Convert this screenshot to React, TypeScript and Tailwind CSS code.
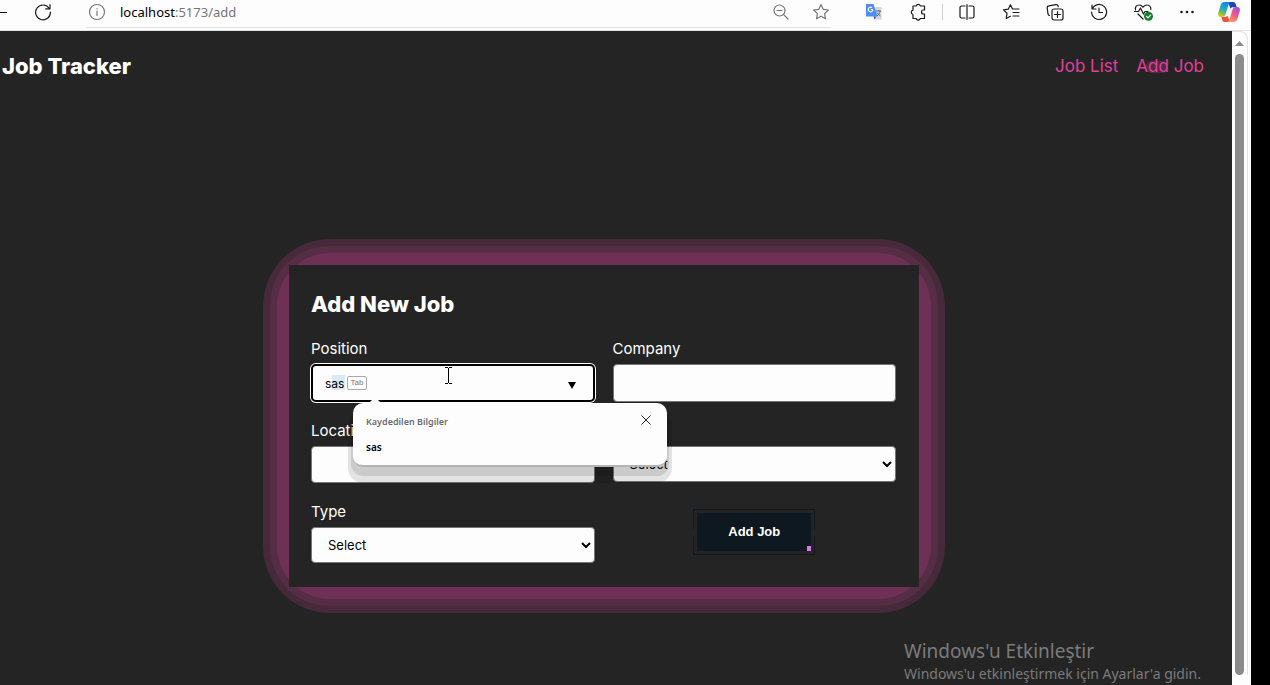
import { useState, type ReactNode } from "react";

function ToolButton({ label, children }: { label: string; children: ReactNode }) {
  return (
    <button type="button" aria-label={label} className="flex h-6 w-11 shrink-0 items-center justify-center text-[#1b1b1b]">
      {children}
    </button>
  );
}

function Icon({ children, className = "" }: { children: ReactNode; className?: string }) {
  return (
    <svg
      width="18"
      height="18"
      viewBox="0 0 18 18"
      fill="none"
      stroke="currentColor"
      strokeWidth="1.2"
      strokeLinecap="round"
      strokeLinejoin="round"
      className={className}
      aria-hidden="true"
    >
      {children}
    </svg>
  );
}

const starPath =
  "M9 1.6l2.2 4.7 5.2.7-3.8 3.6.9 5.2L9 13.3l-4.5 2.5.9-5.2L1.6 7l5.2-.7z";

function CopilotLogo() {
  return (
    <svg className="mr-1" width="24" height="22" viewBox="0 0 24 22" aria-hidden="true">
      <defs>
        <linearGradient id="cool" x1="0.6" y1="0" x2="0.25" y2="1">
          <stop offset="0" stopColor="#1683e0" />
          <stop offset="0.4" stopColor="#19a5dc" />
          <stop offset="0.7" stopColor="#5cbf63" />
          <stop offset="1" stopColor="#f2c70c" />
        </linearGradient>
        <linearGradient id="warm" x1="0.8" y1="0" x2="0.3" y2="1">
          <stop offset="0" stopColor="#a44be4" />
          <stop offset="0.5" stopColor="#f0588f" />
          <stop offset="1" stopColor="#ff9d52" />
        </linearGradient>
      </defs>
      <path d="M11 1h5.200c1.500 0 2.200 1 2.600 2.300l.9 2.900h-3c-1.600 0-2.600.4-3.200 1.600z" fill="#1b48ae" />
      <path d="M7.500 1h6.300c-1.300.3-1.900 1.300-2.300 2.700L8.600 13c-.6 2.100-1.500 3-3.400 3H4C1.500 16 .6 14.300 1.200 12L3.500 4.500C4.200 2.200 5.300 1 7.500 1z" fill="url(#cool)" />
      <path d="M13 21H7.800c-1.500 0-2.200-1-2.600-2.300L4.400 16h2.800c1.600 0 2.600-.4 3.200-1.600z" fill="#f2503e" />
      <path d="M16.500 21h-6.300c1.300-.3 1.900-1.300 2.300-2.700L15.400 9c.6-2.100 1.500-3 3.400-3H20c2.500 0 3.400 1.700 2.800 4l-2.300 7.500c-.7 2.300-1.800 3.500-4 3.500z" fill="url(#warm)" />
    </svg>
  );
}

function BrowserBar() {
  return (
    <header className="flex h-[31px] shrink-0 items-start border-b border-[#e3e3e3] bg-[#fdfdfd]">
      <div className="flex h-6 w-[86px] shrink-0 items-center">
        <span className="h-px w-[7px] bg-black" />
        <button type="button" aria-label="Reload" className="ml-[27px] flex text-[#1b1b1b]">
          <Icon>
            <path d="M15.300 5.500A7.400 7.400 0 1 0 16.400 9" />
            <path d="M16 1.500v4.300h-4.300" />
          </Icon>
        </button>
      </div>
      <div className="flex h-7 flex-1 items-start border-b border-[#e3e3e3]">
        <div className="flex h-6 flex-1 items-center">
          <Icon className="ml-[2px] text-[#767676]">
            <circle cx="9" cy="9" r="7.500" />
            <path d="M9 8.200v4.300M9 5.500v.3" />
          </Icon>
          <p className="ml-[14px] font-['Noto_Sans',sans-serif] text-[13px] leading-6 text-[#757575]">
            <span className="text-black">localhost</span>:5173/add
          </p>
        </div>
        <button type="button" aria-label="Zoom out" className="flex h-6 w-10 items-center justify-center text-[#767676]">
          <Icon>
            <circle cx="7.500" cy="7.500" r="5.500" />
            <path d="M11.600 11.600L16 16M5 7.500h5" />
          </Icon>
        </button>
        <button type="button" aria-label="Add to favorites" className="mr-[-10px] flex h-6 w-10 items-center justify-center text-[#767676]">
          <Icon>
            <path d={starPath} />
          </Icon>
        </button>
      </div>
      <div className="flex w-[420px] shrink-0 items-center pl-[21px]">
        <ToolButton label="Translate">
          <svg width="18" height="18" viewBox="0 0 18 18" aria-hidden="true">
            <path d="M7 4h9.500v12.500H9.500z" fill="#d6d6d6" />
            <path d="M8.500 13.500h3L9.500 16.500z" fill="#3055c4" />
            <path d="M1 1h7.500l4 12.500H1z" fill="#4b8df5" />
            <path d="M8 6.500H5.800M7.900 6.600A2.300 2.300 0 1 1 7 4.700" fill="none" stroke="#fff" strokeWidth="1.200" />
            <path d="M11 8h5M13.500 7v1M15 8c-.4 2.200-1.500 3.800-3 5M12 9.500c.8 1.500 2 2.600 3.500 3.500" fill="none" stroke="#5c6f80" />
          </svg>
        </ToolButton>
        <ToolButton label="Extensions">
          <Icon>
            <path d="M4 3h3.200a2.200 2.200 0 0 1 4.200 0H15.500v4h-1a2 2 0 0 0 0 4h1v4.500h-4.200a2.200 2.200 0 0 1-4.200 0H4V11.500a2.200 2.200 0 0 1 0-4.300z" />
          </Icon>
        </ToolButton>
        <span className="mx-[2px] h-4 w-px shrink-0 bg-[#cfcfcf]" />
        <ToolButton label="Split screen">
          <Icon>
            <path d="M7 3H3.500A1.500 1.500 0 0 0 2 4.500v9A1.500 1.500 0 0 0 3.500 15H7M11 3h3.500A1.500 1.500 0 0 1 16 4.500v9a1.500 1.500 0 0 1-1.500 1.500H11M9 1.500v15" />
          </Icon>
        </ToolButton>
        <ToolButton label="Favorites">
          <Icon>
            <path d="M10.500 6L8.400 1.800 6.200 6.200l-4.700.7L5 10.300 4.200 15.500l4.200-2.200M10.500 6H17M11 9.500h6M11 13h6" />
          </Icon>
        </ToolButton>
        <ToolButton label="Collections">
          <Icon>
            <rect x="6" y="6" width="11" height="11" rx="2" />
            <path d="M11.500 8.500v6M8.500 11.500h6M3.500 12.500A2 2 0 0 1 2 11L1.200 5a2 2 0 0 1 1.700-2.200l7-1.200a2 2 0 0 1 2.300 1.700v.4" />
          </Icon>
        </ToolButton>
        <ToolButton label="History">
          <Icon>
            <path d="M2 2v4h4M2.300 5.800A7.500 7.500 0 1 1 1.600 9M9 5v4.500h3.500" />
          </Icon>
        </ToolButton>
        <ToolButton label="Browser essentials">
          <svg width="20" height="18" viewBox="0 0 20 18" fill="none" strokeLinecap="round" strokeLinejoin="round" aria-hidden="true">
            <path
              d="M2.500 7C1.800 4 3.500 2 6 2c2 0 3 1 4 2.200C11 3 12 2 14 2c2.500 0 4.200 2 3.800 4.500M1.500 8.500h4l2-3.500 3 6 1.500-2.500H15M5 11l5 5"
              stroke="#1b1b1b"
              strokeWidth="1.200"
            />
            <circle cx="15.500" cy="13.300" r="4.500" fill="#138028" />
            <path d="M13.500 13.300l1.500 1.500 2.600-2.600" stroke="#fff" strokeWidth="1.200" />
          </svg>
        </ToolButton>
        <ToolButton label="Settings">
          <svg width="18" height="18" viewBox="0 0 18 18" fill="#1b1b1b" aria-hidden="true">
            <circle cx="3.500" cy="9" r="1.300" />
            <circle cx="9" cy="9" r="1.300" />
            <circle cx="14.500" cy="9" r="1.300" />
          </svg>
        </ToolButton>
        <ToolButton label="Copilot">
          <CopilotLogo />
        </ToolButton>
      </div>
    </header>
  );
}

function Field({ id, label, children }: { id: string; label: string; children: ReactNode }) {
  return (
    <div className="relative flex min-w-0 flex-col gap-1">
      <label htmlFor={id} className="text-[15px] leading-[22px] text-white">
        {label}
      </label>
      {children}
    </div>
  );
}

function SelectField({ id, label }: { id: string; label: string }) {
  return (
    <Field id={id} label={label}>
      <select id={id} className="h-9 w-full rounded-[4px] border border-[#767676] bg-[#fdfdfd] px-3 text-[13px] text-black">
        <option>Select</option>
      </select>
    </Field>
  );
}

function SavedInfo({ onClose }: { onClose: () => void }) {
  return (
    <div className="absolute top-[65px] left-[42px] z-10 h-[64px] w-[314px] rounded-[10px] border-b-2 border-[#b3b3b3] bg-[#fdfdfd] px-[13px] pt-[10px] font-['Noto_Sans',sans-serif] shadow-[0_7px_0_2px_rgba(0,0,0,0.1),0_11px_0_5px_rgba(0,0,0,0.1)]">
      <svg className="absolute -top-[4px] left-[15px]" width="14" height="5" viewBox="0 0 14 5" aria-hidden="true">
        <path d="M0 5L5 0h4l5 5z" fill="#fdfdfd" />
      </svg>
      <div className="flex items-center justify-between">
        <h2 className="text-[9px] leading-[18px] font-semibold text-[#6b6b6b]">Kaydedilen Bilgiler</h2>
        <button type="button" aria-label="Close" onClick={onClose} className="mr-[3px] mb-1 text-[#222222]">
          <svg width="10" height="10" viewBox="0 0 10 10" stroke="currentColor" aria-hidden="true">
            <path d="M.5.5l9 9M9.500.5l-9 9" />
          </svg>
        </button>
      </div>
      <p className="mt-[7px] text-[10px] leading-[18px] font-semibold text-black">sas</p>
    </div>
  );
}

function JobForm() {
  const [position, setPosition] = useState("sas");
  const [open, setOpen] = useState(true);
  return (
    <div className="rounded-[67px] bg-[#46293a] p-[7px]">
      <div className="rounded-[59px] bg-[#552d45] p-[7px]">
        <div className="rounded-[53px] bg-[#6e3055] p-3">
          <form
            onSubmit={(event) => event.preventDefault()}
            className="w-[630px] max-w-full bg-[#242424] pt-[22px] pr-[23px] pb-6 pl-[22px]"
          >
            <h1 className="mb-[17px] text-[22px] leading-[34px] font-extrabold text-white">Add New Job</h1>
            <div className="grid grid-cols-2 gap-[18px]">
              <Field id="position" label="Position">
                <div className="relative rounded-[5px] bg-[#fdfdfd]">
                  <span className="absolute top-[11px] left-[21px] h-[15px] w-[13px] bg-[#dbe9fb]" />
                  <input
                    id="position"
                    value={position}
                    onChange={(event) => setPosition(event.target.value)}
                    className="relative block h-[38px] w-full rounded-[5px] border-2 border-black bg-transparent px-3 text-[12px] text-black ring-1 ring-white outline-none"
                  />
                  <span className="absolute top-[12px] left-[36px] flex h-[14px] w-5 items-center justify-center rounded-[2px] border border-[#a8a8a8] font-['Liberation_Sans',sans-serif] text-[8px] text-[#777777]">
                    Tab
                  </span>
                  <svg className="absolute top-[18px] right-[19px]" width="8" height="7" viewBox="0 0 8 7" aria-hidden="true">
                    <path d="M0 0h8L4 7z" fill="#000" />
                  </svg>
                  <svg className="absolute top-[3px] left-[134px]" width="7" height="17" viewBox="0 0 7 17" stroke="#000" aria-hidden="true">
                    <path d="M0 .5h3M4 .5h3M3.500 1v15M0 16.500h3M4 16.500h3" />
                  </svg>
                </div>
                {open && <SavedInfo onClose={() => setOpen(false)} />}
              </Field>
              <Field id="company" label="Company">
                <input id="company" className="h-[38px] w-full rounded-[4px] border border-[#767676] bg-[#fdfdfd] px-3 text-[13px] text-black" />
              </Field>
              <Field id="location" label="Location">
                <input id="location" className="h-[37px] w-full rounded-[4px] border border-[#767676] bg-[#fdfdfd] px-3 text-[13px] text-black" />
              </Field>
              <SelectField id="status" label="Status" />
              <SelectField id="type" label="Type" />
              <div className="flex items-center justify-center">
                <div className="relative border border-[#10191f] p-[3px]">
                  <span className="absolute top-[19px] -left-px h-[7px] w-px bg-[#242424]" />
                  <span className="absolute top-[19px] -right-px h-[7px] w-px bg-[#242424]" />
                  <button
                    type="submit"
                    className="relative block h-[38px] w-[114px] bg-[#0e1820] font-['Liberation_Sans',sans-serif] text-[13px] font-bold text-white"
                  >
                    Add Job
                    <span className="absolute right-0 bottom-0 h-[5px] w-1 bg-[#e66fea]" />
                  </button>
                </div>
              </div>
            </div>
          </form>
        </div>
      </div>
    </div>
  );
}

function Scrollbar() {
  return (
    <div className="flex w-[19px] shrink-0 flex-col bg-[#fdfdfd] pr-[3px] pb-[10px]" aria-hidden="true">
      <div className="flex flex-1 flex-col items-center gap-2 rounded-tr-[8px] border-t border-r border-[#e3e3e3] pt-[9px]">
        <svg width="9" height="5" viewBox="0 0 9 5">
          <path d="M4.500 0L9 5H0z" fill="#8b8b8b" />
        </svg>
        <div className="w-[9px] flex-1 rounded-full bg-[#8b8b8b]" />
      </div>
    </div>
  );
}

export default function App() {
  return (
    <div className="relative flex min-h-screen bg-black font-[Inter,sans-serif]">
      <div className="flex min-w-0 flex-1 flex-col">
        <BrowserBar />
        <div className="flex flex-1">
          <div className="isolate flex min-w-0 flex-1 flex-col bg-[#242424]">
            <div className="flex h-[70px] items-center justify-between pr-[28px] pl-[2px]">
              <p className="text-[22px] font-extrabold text-white">Job Tracker</p>
              <nav className="flex gap-[18px] pt-[2px] text-[17px] text-[#e0409a]">
                <a href="#list">Job List</a>
                <a href="#add" className="relative">
                  <span className="absolute top-[7px] left-[10px] -z-10 h-[12px] w-[22px] rounded-[5px] bg-[#4f2a42]" />
                  Add Job
                </a>
              </nav>
            </div>
            <main className="isolate mt-[138px] flex justify-center pr-6">
              <JobForm />
            </main>
          </div>
          <Scrollbar />
        </div>
      </div>
      <div className="w-[19px] shrink-0 bg-black" />
      <aside className="absolute right-[69px] bottom-0 font-['Noto_Sans',sans-serif] text-[#7b7b7b]">
        <p className="text-[19px] leading-6">Windows'u Etkinleştir</p>
        <p className="text-[14px] leading-[22px]">Windows'u etkinleştirmek için Ayarlar'a gidin.</p>
      </aside>
    </div>
  );
}
